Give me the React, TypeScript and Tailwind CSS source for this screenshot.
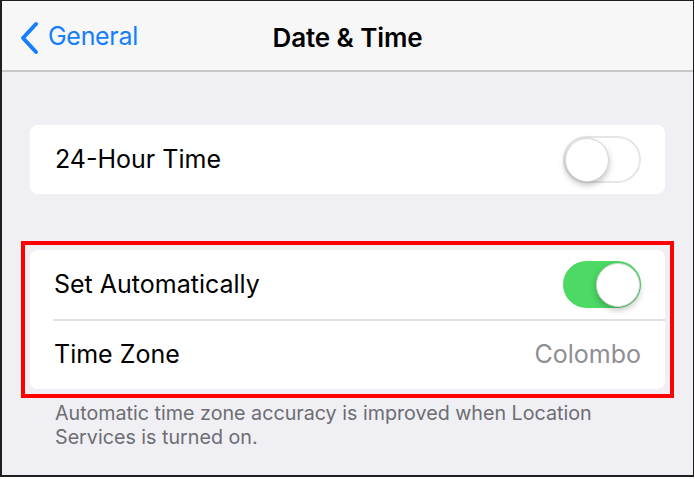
import React from "react";

const font = { fontFamily: "Inter, 'Noto Sans', sans-serif" };

const Toggle = ({ on }: { on: boolean }) => (
  <div
    className={
      on
        ? "w-[78px] h-[47px] rounded-full bg-[#4cd964] flex items-center justify-end p-[1px]"
        : "w-[78px] h-[47px] rounded-full bg-white border-2 border-[#e5e5ea] flex items-center justify-start"
    }
  >
    <div className="w-[44px] h-[44px] rounded-full bg-white shadow-[0_3px_6px_rgba(0,0,0,0.25)] border border-[#d6d6d6]" />
  </div>
);

const App = () => {
  return (
    <div className="w-[695px] h-[479px] bg-white" style={font}>
      <div className="w-[694px] h-[477px] border-l-2 border-t border-r border-b-2 border-[#1f1f1f] bg-[#efeff4] flex flex-col">
        {/* nav bar */}
        <div className="h-[71px] shrink-0 bg-[#f7f7f8] border-b-2 border-[#c8c7cc] relative flex items-center pt-[4px]">
          <div className="flex items-center pl-[16px] gap-[8px] text-[#147efb]">
            <svg width="22" height="34" viewBox="0 0 22 34" fill="none">
              <path
                d="M18 3 L5 17 L18 31"
                stroke="currentColor"
                strokeWidth="4"
                strokeLinecap="round"
                strokeLinejoin="round"
              />
            </svg>
            <span className="text-[25px] tracking-[-0.3px] mt-[-2px]">General</span>
          </div>
          <div className="absolute inset-0 flex items-center justify-center pt-[3px]">
            <span className="text-[26px] font-semibold text-black tracking-[-0.1px]">Date &amp; Time</span>
          </div>
        </div>

        {/* body */}
        <div className="flex flex-col px-[19px] pt-[53px]">
          <div className="mx-[9px] h-[69px] bg-white rounded-[8px] flex items-center justify-between pl-[25px] pr-[24px]">
            <span className="text-[25px] text-black">24-Hour Time</span>
            <Toggle on={false} />
          </div>

          <div className="mt-[47px] border-4 border-[#ff0000] p-[5px]">
            <div className="bg-white rounded-[8px] flex flex-col">
              <div className="h-[69px] flex items-center justify-between pl-[24px] pr-[24px]">
                <span className="text-[25px] text-black">Set Automatically</span>
                <Toggle on={true} />
              </div>
              <div className="ml-[23px] h-[2px] bg-[#e0e0e5]" />
              <div className="h-[68px] flex items-center justify-between pl-[24px] pr-[24px]">
                <span className="text-[25px] text-black">Time Zone</span>
                <span className="text-[25px] text-[#8e8e93]">Colombo</span>
              </div>
            </div>
          </div>

          <p className="mt-[3px] pl-[34px] text-[19.7px] leading-[24px] text-[#6d6d72]">
            Automatic time zone accuracy is improved when Location
            <br />
            Services is turned on.
          </p>
        </div>
      </div>
    </div>
  );
};

export default App;
